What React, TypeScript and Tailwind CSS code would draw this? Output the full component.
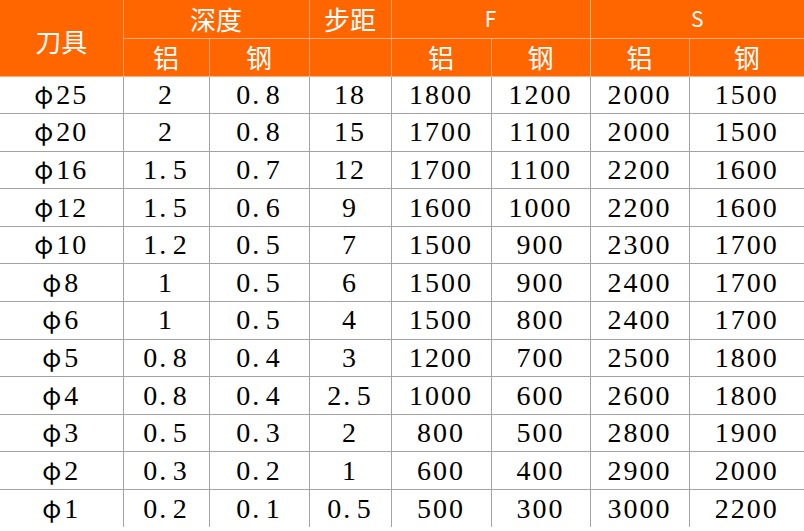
import * as React from "react";

type Row = [string, string, string, string, string, string, string, string];

// 刀具 | 深度 铝 钢 | 步距 | F 铝 钢 | S 铝 钢
const rows: Row[] = [
  ["25", "2", "0.\u200a8", "18", "1800", "1200", "2000", "1500"],
  ["20", "2", "0.\u200a8", "15", "1700", "1100", "2000", "1500"],
  ["16", "1.\u200a5", "0.\u200a7", "12", "1700", "1100", "2200", "1600"],
  ["12", "1.\u200a5", "0.\u200a6", "9", "1600", "1000", "2200", "1600"],
  ["10", "1.\u200a2", "0.\u200a5", "7", "1500", "900", "2300", "1700"],
  ["8", "1", "0.\u200a5", "6", "1500", "900", "2400", "1700"],
  ["6", "1", "0.\u200a5", "4", "1500", "800", "2400", "1700"],
  ["5", "0.\u200a8", "0.\u200a4", "3", "1200", "700", "2500", "1800"],
  ["4", "0.\u200a8", "0.\u200a4", "2.\u200a5", "1000", "600", "2600", "1800"],
  ["3", "0.\u200a5", "0.\u200a3", "2", "800", "500", "2800", "1900"],
  ["2", "0.\u200a3", "0.\u200a2", "1", "600", "400", "2900", "2000"],
  ["1", "0.\u200a2", "0.\u200a1", "0.\u200a5", "500", "300", "3000", "2200"],
];

const widths = ["w-[123px]", "w-[86px]", "w-[100px]", "w-[82px]", "w-[100px]", "w-[99px]", "w-[99px]", "w-[115px]"];

const th =
  "border border-[#ffad7a] text-white font-normal text-[26px] font-['Noto_Sans_CJK_SC'] text-center align-middle p-0 leading-none";
const td =
  "border border-[#a3a3a3] text-black text-[28px] tracking-[2px] font-['Liberation_Serif'] text-center align-middle p-0 leading-none h-[37.6px]";

export default function App() {
  return (
    <div className="w-[804px] h-[531px] bg-white overflow-hidden">
      <table className="table-fixed border-collapse w-[804px] border-hidden">
        <colgroup>
          {widths.map((w, i) => (
            <col key={i} className={w} />
          ))}
        </colgroup>
        <thead className="bg-[#ff6600]">
          <tr className="h-[38px]">
            <th rowSpan={2} className={`${th} pt-[6px]`}>
              刀具
            </th>
            <th colSpan={2} className={th}>
              深度
            </th>
            <th className={th}>步距</th>
            <th colSpan={2} className={`${th} !text-[21px]`}>
              F
            </th>
            <th colSpan={2} className={`${th} !text-[21px]`}>
              S
            </th>
          </tr>
          <tr className="h-[38px]">
            <th className={th}>铝</th>
            <th className={th}>钢</th>
            <th className={th}></th>
            <th className={th}>铝</th>
            <th className={th}>钢</th>
            <th className={th}>铝</th>
            <th className={th}>钢</th>
          </tr>
        </thead>
        <tbody>
          {rows.map((r) => (
            <tr key={r[0]}>
              <td className={td}>
                <span className="font-['Noto_Sans_CJK_SC'] text-[25px] tracking-normal mr-[3px]">φ</span>
                {r[0]}
              </td>
              {r.slice(1).map((v, i) => (
                <td key={i} className={td}>
                  {v}
                </td>
              ))}
            </tr>
          ))}
        </tbody>
      </table>
    </div>
  );
}
